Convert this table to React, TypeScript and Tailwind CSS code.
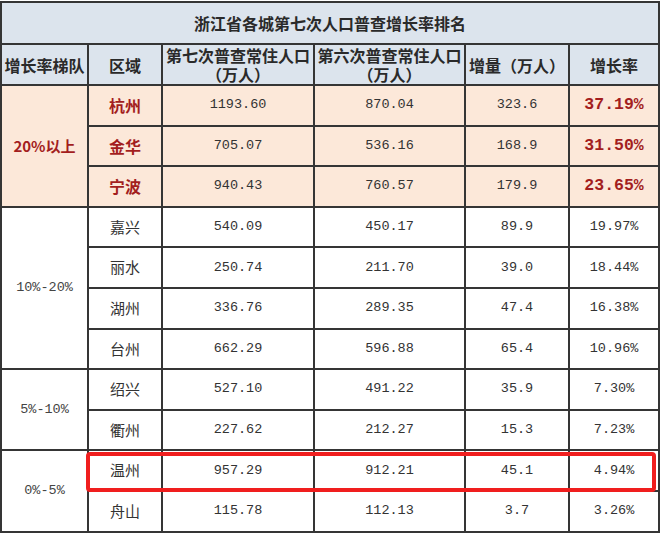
import React from 'react';

type Row = { name: string; c7: string; c6: string; inc: string; rate: string };

const top: Row[] = [
  { name: '杭州', c7: '1193.60', c6: '870.04', inc: '323.6', rate: '37.19%' },
  { name: '金华', c7: '705.07', c6: '536.16', inc: '168.9', rate: '31.50%' },
  { name: '宁波', c7: '940.43', c6: '760.57', inc: '179.9', rate: '23.65%' },
];

const groups: { label: string; rows: Row[] }[] = [
  {
    label: '10%-20%',
    rows: [
      { name: '嘉兴', c7: '540.09', c6: '450.17', inc: '89.9', rate: '19.97%' },
      { name: '丽水', c7: '250.74', c6: '211.70', inc: '39.0', rate: '18.44%' },
      { name: '湖州', c7: '336.76', c6: '289.35', inc: '47.4', rate: '16.38%' },
      { name: '台州', c7: '662.29', c6: '596.88', inc: '65.4', rate: '10.96%' },
    ],
  },
  {
    label: '5%-10%',
    rows: [
      { name: '绍兴', c7: '527.10', c6: '491.22', inc: '35.9', rate: '7.30%' },
      { name: '衢州', c7: '227.62', c6: '212.27', inc: '15.3', rate: '7.23%' },
    ],
  },
  {
    label: '0%-5%',
    rows: [
      { name: '温州', c7: '957.29', c6: '912.21', inc: '45.1', rate: '4.94%' },
      { name: '舟山', c7: '115.78', c6: '112.13', inc: '3.7', rate: '3.26%' },
    ],
  },
];

const cell = 'border-2 border-[#353535] text-center align-middle p-0';
const cjk = "font-['Noto_Sans_CJK_SC',sans-serif]";
const mono = "font-['Liberation_Mono','Noto_Sans_CJK_SC',monospace]";

export default function App() {
  return (
    <div className="w-[660px] h-[534px] bg-white overflow-hidden">
      <div className="relative w-[659px] pt-px">
        <table className="w-[658px] table-fixed border-collapse text-[#333]">
          <colgroup>
            <col className="w-[87px]" />
            <col className="w-[74px]" />
            <col className="w-[152px]" />
            <col className="w-[151px]" />
            <col className="w-[104px]" />
            <col className="w-[90px]" />
          </colgroup>
          <thead>
            <tr className="h-[42px] bg-[#dce4ed]">
              <th colSpan={6} className={`${cell} ${cjk} text-[16px] font-bold text-[#2a2a2a]`}>
                浙江省各城第七次人口普查增长率排名
              </th>
            </tr>
            <tr className="h-[41px] bg-[#dce4ed]">
              <th className={`${cell} ${cjk} text-[16px] font-bold text-[#2a2a2a]`}>增长率梯队</th>
              <th className={`${cell} ${cjk} text-[16px] font-bold text-[#2a2a2a]`}>区域</th>
              <th className={`${cell} ${cjk} text-[16px] font-bold leading-[19px] text-[#2a2a2a]`}>
                第七次普查常住人口
                <br />
                （万人）
              </th>
              <th className={`${cell} ${cjk} text-[16px] font-bold leading-[19px] text-[#2a2a2a]`}>
                第六次普查常住人口
                <br />
                （万人）
              </th>
              <th className={`${cell} ${cjk} text-[16px] font-bold text-[#2a2a2a]`}>增量（万人）</th>
              <th className={`${cell} ${cjk} text-[16px] font-bold text-[#2a2a2a]`}>增长率</th>
            </tr>
          </thead>
          <tbody>
            {top.map((r, i) => (
              <tr key={r.name} className="h-[40.6px] bg-[#fce8d9]">
                {i === 0 && (
                  <td rowSpan={3} className={`${cell} ${cjk} text-[15px] font-bold text-[#a31e1e]`}>
                    20%以上
                  </td>
                )}
                <td className={`${cell} ${cjk} text-[16px] font-bold text-[#a31e1e]`}>{r.name}</td>
                <td className={`${cell} ${mono} text-[13.5px]`}>{r.c7}</td>
                <td className={`${cell} ${mono} text-[13.5px]`}>{r.c6}</td>
                <td className={`${cell} ${mono} text-[13.5px]`}>{r.inc}</td>
                <td className={`${cell} ${mono} text-[16.5px] font-bold text-[#a31e1e]`}>{r.rate}</td>
              </tr>
            ))}
            {groups.map((g) =>
              g.rows.map((r, i) => (
                <tr key={r.name} className="h-[40.6px] bg-white">
                  {i === 0 && (
                    <td rowSpan={g.rows.length} className={`${cell} ${mono} text-[13.5px] text-[#444]`}>
                      {g.label}
                    </td>
                  )}
                  <td className={`${cell} ${cjk} text-[15px] text-[#333]`}>{r.name}</td>
                  <td className={`${cell} ${mono} text-[13.5px]`}>{r.c7}</td>
                  <td className={`${cell} ${mono} text-[13.5px]`}>{r.c6}</td>
                  <td className={`${cell} ${mono} text-[13.5px]`}>{r.inc}</td>
                  <td className={`${cell} ${mono} text-[13.5px]`}>{r.rate}</td>
                </tr>
              ))
            )}
          </tbody>
        </table>
        {/* highlight around 温州 */}
        <div className="absolute left-[86px] top-[452px] w-[570px] h-[40px] border-[4px] border-[#f01e1e] rounded-[4px] pointer-events-none" />
      </div>
    </div>
  );
}
